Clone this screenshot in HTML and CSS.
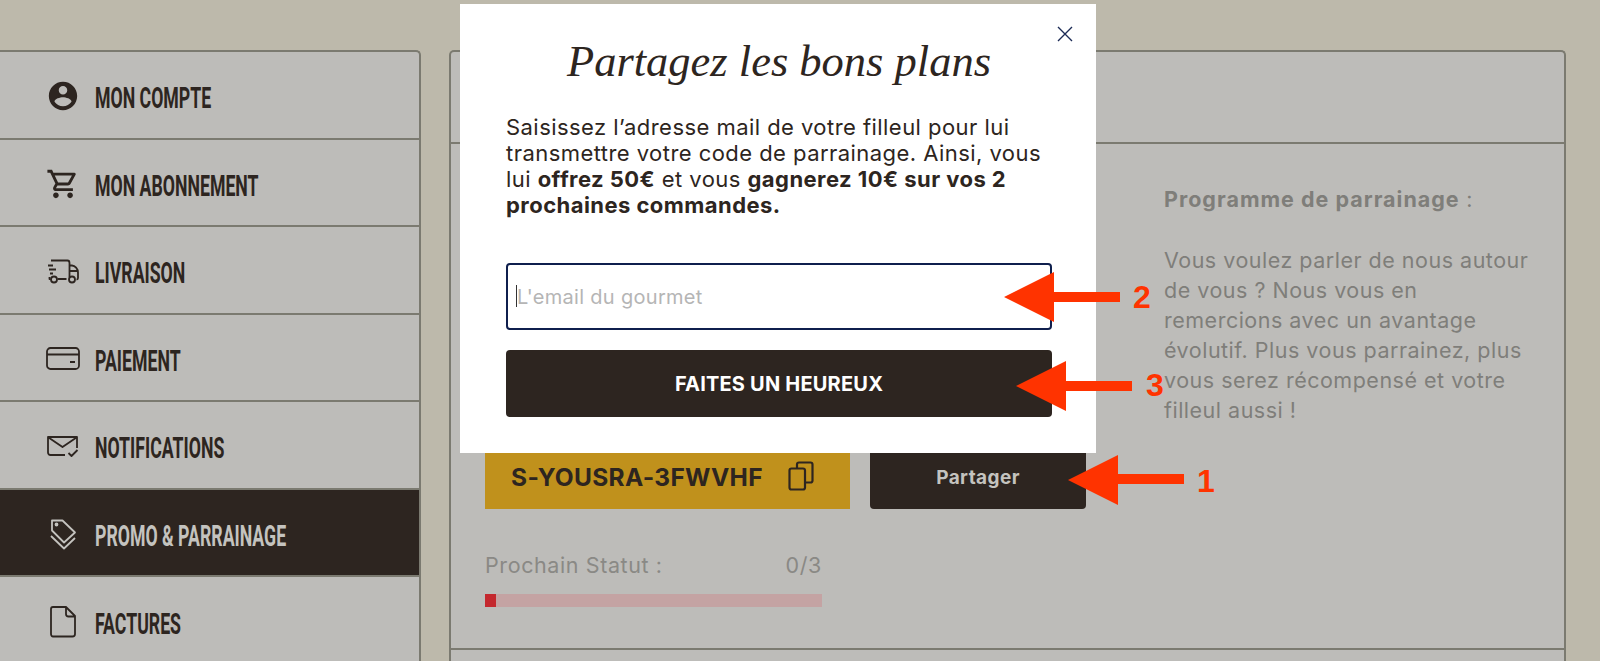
FILE: index.html
```html
<!DOCTYPE html>
<html lang="fr">

<head>
    <meta charset="UTF-8">
    <meta name="viewport" content="width=device-width, initial-scale=1.0">
    <title>Partagez les bons plans</title>
    <link rel="stylesheet" href="styles.css">
</head>

<body>
    <div class="page">
        <nav class="sidebar">
            <a href="#" class="nav-item">
                <svg class="nav-icon" viewBox="0 0 24 24"><path class="solid" d="M12 2C6.48 2 2 6.48 2 12s4.48 10 10 10 10-4.48 10-10S17.52 2 12 2zm0 3c1.66 0 3 1.34 3 3s-1.34 3-3 3-3-1.34-3-3 1.34-3 3-3zm0 14.2c-2.5 0-4.71-1.28-6-3.22.03-1.99 4-3.08 6-3.08 1.99 0 5.97 1.09 6 3.08-1.29 1.94-3.5 3.22-6 3.22z"/></svg>
                <span class="nav-label">MON COMPTE</span>
            </a>
            <a href="#" class="nav-item">
                <svg class="nav-icon" viewBox="0 0 24 24"><path class="solid" d="M15.55 13c.75 0 1.41-.41 1.75-1.03l3.58-6.49c.37-.66-.11-1.48-.87-1.48H5.21l-.94-2H1v2h2l3.6 7.59-1.35 2.44C4.52 15.37 5.48 17 7 17h12v-2H7l1.1-2h7.45zM6.16 6h12.15l-2.76 5H8.53L6.16 6zM7 18c-1.1 0-1.99.9-1.99 2S5.9 22 7 22s2-.9 2-2-.9-2-2-2zm10 0c-1.1 0-1.99.9-1.99 2s.89 2 1.99 2 2-.9 2-2-.9-2-2-2z"/></svg>
                <span class="nav-label">MON ABONNEMENT</span>
            </a>
            <a href="#" class="nav-item">
                <svg class="nav-icon" viewBox="0 0 34 34"><path class="line" d="M5 6.500h16.500c2 0 2 1 2 2.500V23M7 11.500H2M10 15.500H3M7 19.500H4M4.500 25h-1v-2M11.500 25h9M23.500 11.500h2.500c3 0 6 3.500 6 7V24c0 1-.500 1.500-1.500 1.500M23.500 17h8"/><circle class="line" cx="8" cy="25.500" r="3"/><circle class="line" cx="26" cy="25.500" r="3"/></svg>
                <span class="nav-label">LIVRAISON</span>
            </a>
            <a href="#" class="nav-item">
                <svg class="nav-icon" viewBox="0 0 34 34"><rect class="line" x="1" y="6" width="32" height="21" rx="3.500"/><path class="line" d="M1 12.500h32M24 20h5"/></svg>
                <span class="nav-label">PAIEMENT</span>
            </a>
            <a href="#" class="nav-item">
                <svg class="nav-icon" viewBox="0 0 34 34"><path class="line" d="M19 26H4.500C3 26 2 25 2 23.500V8h29v11M2.500 8.500L16.500 18 30.500 8.500M22.500 24l3 3 6-6"/></svg>
                <span class="nav-label">NOTIFICATIONS</span>
            </a>
            <a href="#" class="nav-item active">
                <svg class="nav-icon" viewBox="0 0 34 34"><path class="line" d="M6 3.500h10.500L29 15.500 18 25.500 6 13.500zM5 19l13 12.500L29 21"/><circle class="line" cx="10.500" cy="7.500" r="1"/></svg>
                <span class="nav-label">PROMO &amp; PARRAINAGE</span>
            </a>
            <a href="#" class="nav-item">
                <svg class="nav-icon" viewBox="0 0 34 34"><path class="line" d="M7 2h13l9 9v18c0 1.500-1 2.500-2.500 2.500h-19.500C6 31.500 5 30.500 5 29V4c0-1.500 .5-2 2-2zM20 2v7c0 1.500 1 2.500 2.500 2.500H29"/></svg>
                <span class="nav-label">FACTURES</span>
            </a>
        </nav>

        <main class="panel">
            <div class="panel-header"></div>
            <div class="panel-body">
                <div class="parrain-col">
                    <div class="code-row">
                        <div class="code-box">
                            <span>S-YOUSRA-3FWVHF</span>
                            <svg class="copy-icon" viewBox="0 0 26 30"><rect x="9" y="1.500" width="15.500" height="20" rx="2"/><rect x="1.500" y="7.500" width="15.500" height="21" rx="2" class="copy-front"/></svg>
                        </div>
                        <button class="share-btn">Partager</button>
                    </div>
                    <div class="status-row">
                        <span>Prochain Statut :</span>
                        <span>0/3</span>
                    </div>
                    <div class="status-bar">
                        <div class="status-fill" style="width: 11px;"></div>
                    </div>
                </div>
                <div class="info-col">
                    <p><strong>Programme de parrainage</strong> :</p>
                    <p>Vous voulez parler de nous autour<br>de vous ? Nous vous en<br>remercions avec un avantage<br>évolutif. Plus vous parrainez, plus<br>vous serez récompensé et votre<br>filleul aussi !</p>
                </div>
            </div>
        </main>
    </div>

    <div class="modal">
        <svg class="modal-close" viewBox="0 0 16 16"><path d="M1 1l14 14M15 1L1 15"/></svg>
        <h2 class="modal-title">Partagez les bons plans</h2>
        <p class="modal-text">Saisissez l’adresse mail de votre filleul pour lui<br>transmettre votre code de parrainage. Ainsi, vous<br>lui <strong>offrez 50€</strong> et vous <strong>gagnerez 10€ sur vos 2<br>prochaines commandes.</strong></p>
        <div class="email-field">
            <input type="text" class="email-input" placeholder="L'email du gourmet">
            <span class="caret"></span>
        </div>
        <button class="modal-btn">FAITES UN HEUREUX</button>
    </div>

    <!-- red annotations on top of the screenshot -->
    <svg class="arrow arrow-1" viewBox="0 0 116 50"><polygon points="0,25 50,0 50,19 116,19 116,29 50,29 50,50"/></svg>
    <span class="mark mark-1">1</span>
    <svg class="arrow arrow-2" viewBox="0 0 116 50"><polygon points="0,25 50,0 50,20 116,20 116,30 50,30 50,50"/></svg>
    <span class="mark mark-2">2</span>
    <svg class="arrow arrow-3" viewBox="0 0 116 50"><polygon points="0,25 50,0 50,20 116,20 116,30 50,30 50,50"/></svg>
    <span class="mark mark-3">3</span>
</body>

</html>
```

FILE: styles.css
```css
body {
    margin: 0;
    height: 661px;
    overflow: hidden;
    position: relative;
    background: #bdb9ab;
    font-family: "Inter", "Open Sans", sans-serif;
    color: #2d2520;
}

.page {
    display: flex;
    align-items: flex-start;
    gap: 28px;
    padding-top: 50px;
}

/* side menu */
.sidebar {
    width: 421px;
    flex-shrink: 0;
    box-sizing: border-box;
    background: #bdbcb9;
    border: 2px solid #7b7a70;
    border-left: none;
    border-bottom: none;
    border-radius: 0 5px 0 0;
}

.nav-item {
    display: flex;
    align-items: center;
    gap: 15px;
    height: 87.5px;
    box-sizing: border-box;
    padding-left: 46px;
    padding-top: 7px;
    border-bottom: 2px solid #7b7a70;
    color: #2d2520;
    text-decoration: none;
    white-space: nowrap;
}

.nav-item:last-child {
    border-bottom: none;
}

.nav-item.active {
    background: #2d2520;
    color: #c4c3bf;
}

.nav-icon {
    width: 34px;
    height: 34px;
    flex-shrink: 0;
    margin-top: -4px;
}

.solid {
    fill: currentColor;
}

.line {
    fill: none;
    stroke: currentColor;
    stroke-width: 1.8;
    stroke-linejoin: round;
}

.nav-label {
    display: inline-block;
    font-family: "Roboto", sans-serif;
    font-weight: 700;
    font-size: 30px;
    line-height: 1;
    transform: scaleX(0.59);
    transform-origin: left center;
}

/* main panel */
.panel {
    width: 1117px;
    flex-shrink: 0;
    box-sizing: border-box;
    background: #bdbcb9;
    border: 2px solid #7b7a70;
    border-bottom: none;
    border-radius: 5px 5px 0 0;
    height: 640px;
}

.panel-header {
    height: 90px;
    border-bottom: 2px solid #7b7a70;
}

.panel-body {
    display: flex;
    height: 506px;
    box-sizing: border-box;
    padding-left: 34px;
    border-bottom: 2px solid #7b7a70;
}

.parrain-col {
    width: 601px;
    flex-shrink: 0;
    align-self: flex-end;
    padding-bottom: 41px;
}

.code-row {
    display: flex;
    gap: 20px;
    height: 60px;
}

.code-box {
    width: 365px;
    display: flex;
    align-items: center;
    justify-content: center;
    gap: 25px;
    background: #c0911c;
    font-weight: 700;
    font-size: 24.500px;
    letter-spacing: 0.3px;
    padding: 0 10px 4px 0;
    box-sizing: border-box;
}

.copy-icon {
    width: 26px;
    height: 30px;
    margin-top: -3px;
}

.copy-icon rect {
    fill: none;
    stroke: #2d2520;
    stroke-width: 2.2;
}

.copy-icon .copy-front {
    fill: #c0911c;
}

.share-btn {
    width: 216px;
    padding: 0 0 4px;
    border: none;
    border-radius: 4px;
    background: #2d2520;
    color: #c4c3bf;
    font-family: inherit;
    font-weight: 700;
    font-size: 19px;
    letter-spacing: 0.4px;
}

.status-row {
    display: flex;
    justify-content: space-between;
    width: 337px;
    margin-top: 44px;
    font-size: 21.500px;
    letter-spacing: 0.6px;
    line-height: 24px;
    color: #8a8985;
}

.status-bar {
    width: 337px;
    height: 13px;
    margin-top: 17px;
    background: #c4a3a3;
}

.status-fill {
    height: 100%;
    background: #c4282e;
}

.info-col {
    padding: 40px 0 0 78px;
    font-size: 21.500px;
    letter-spacing: 0.5px;
    line-height: 30px;
    color: #7f7e7a;
    white-space: nowrap;
}

.info-col p {
    margin: 0 0 31px;
}

.info-col strong {
    letter-spacing: 1px;
}

/* popup */
.modal {
    position: absolute;
    left: 460px;
    top: 4px;
    width: 636px;
    height: 449px;
    box-sizing: border-box;
    padding: 0 44px 0 46px;
    background: #fff;
}

.modal-close {
    position: absolute;
    right: 23px;
    top: 22px;
    width: 16px;
    height: 16px;
    fill: none;
    stroke: #1b2a55;
    stroke-width: 1.400;
}

.modal-title {
    margin: 32px 0 0;
    font-family: "Liberation Serif", serif;
    font-style: italic;
    font-weight: 400;
    font-size: 44.500px;
    line-height: 50px;
    text-align: center;
}

.modal-text {
    margin: 28px 0 0;
    font-size: 22px;
    letter-spacing: 0.45px;
    line-height: 26px;
    white-space: nowrap;
}

.email-field {
    position: relative;
    margin-top: 45px;
}

.email-input {
    display: block;
    width: 100%;
    height: 67px;
    box-sizing: border-box;
    padding: 0 0 0 9px;
    border: 2.500px solid #0f1f4d;
    border-radius: 4px;
    outline: none;
    font-family: inherit;
    font-size: 20px;
    letter-spacing: 0.3px;
}

.email-input::placeholder {
    color: #b5b5b5;
}

.caret {
    position: absolute;
    left: 10px;
    top: 22px;
    width: 1px;
    height: 22px;
    background: #333;
}

.modal-btn {
    display: block;
    width: 100%;
    height: 67px;
    margin-top: 20px;
    border: none;
    border-radius: 4px;
    background: #2d2520;
    color: #fff;
    font-family: inherit;
    font-weight: 700;
    font-size: 20px;
    letter-spacing: 0.2px;
}

/* annotations */
.arrow {
    position: absolute;
    width: 116px;
    height: 50px;
    fill: #ff3300;
}

.arrow-1 {
    left: 1068px;
    top: 455px;
}

.arrow-2 {
    left: 1004px;
    top: 272px;
}

.arrow-3 {
    left: 1016px;
    top: 361px;
}

.mark {
    position: absolute;
    font-family: "Liberation Sans", sans-serif;
    font-weight: 700;
    font-size: 32px;
    line-height: 32px;
    color: #ff3300;
}

.mark-1 {
    left: 1197px;
    top: 465px;
}

.mark-2 {
    left: 1133px;
    top: 281px;
}

.mark-3 {
    left: 1146px;
    top: 369px;
}
```
